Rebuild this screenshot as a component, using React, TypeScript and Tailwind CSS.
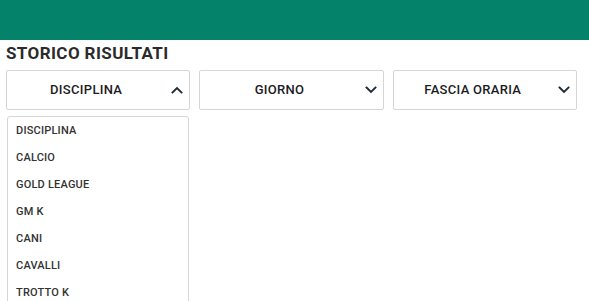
const Chevron = ({ up }: { up?: boolean }) => (
  <svg width="12" height="8" viewBox="0 0 12 8" fill="none" className="text-[#1f2a37]">
    <path
      d={up ? 'M1.5 6.5L6 2L10.5 6.5' : 'M1.5 1.5L6 6L10.5 1.5'}
      stroke="currentColor"
      strokeWidth="1.9"
      strokeLinecap="square"
    />
  </svg>
);

const filters = [
  { label: 'DISCIPLINA', open: true },
  { label: 'GIORNO', open: false },
  { label: 'FASCIA ORARIA', open: false },
];

const options = ['DISCIPLINA', 'CALCIO', 'GOLD LEAGUE', 'GM K', 'CANI', 'CAVALLI', 'TROTTO K'];

export default function App() {
  return (
    <div className="w-[589px] h-[301px] overflow-hidden bg-white font-['Roboto',sans-serif]">
      <div className="h-[40px] bg-[#04836a]" />
      <div className="pl-[6px] pr-[12px]">
        <h1 className="mt-[3px] text-[17px] leading-[20px] tracking-[0.4px] font-bold text-[#2b2b2b]">
          STORICO RISULTATI
        </h1>
        <div className="grid grid-cols-3 gap-[9px] mt-[7px]">
          {filters.map((f) => (
            <div key={f.label} className="relative">
              <button className="w-full h-[40px] flex items-center px-[6px] bg-white border border-[#d6d6d6] rounded-[2px]">
                <span className="flex-1 text-center text-[13px] tracking-[0.3px] font-medium text-[#1c1c24]">
                  {f.label}
                </span>
                <span className="w-[24px] flex justify-end">
                  <Chevron up={f.open} />
                </span>
              </button>
              {f.open && (
                <ul className="absolute left-[1px] right-[1px] top-[46px] pt-[1px] bg-white border border-[#d6d6d6] rounded-[3px]">
                  {options.map((o) => (
                    <li
                      key={o}
                      className="h-[27px] flex items-center pl-[8px] text-[11px] tracking-[0.2px] font-medium text-[#333]"
                    >
                      {o}
                    </li>
                  ))}
                </ul>
              )}
            </div>
          ))}
        </div>
      </div>
    </div>
  );
}
